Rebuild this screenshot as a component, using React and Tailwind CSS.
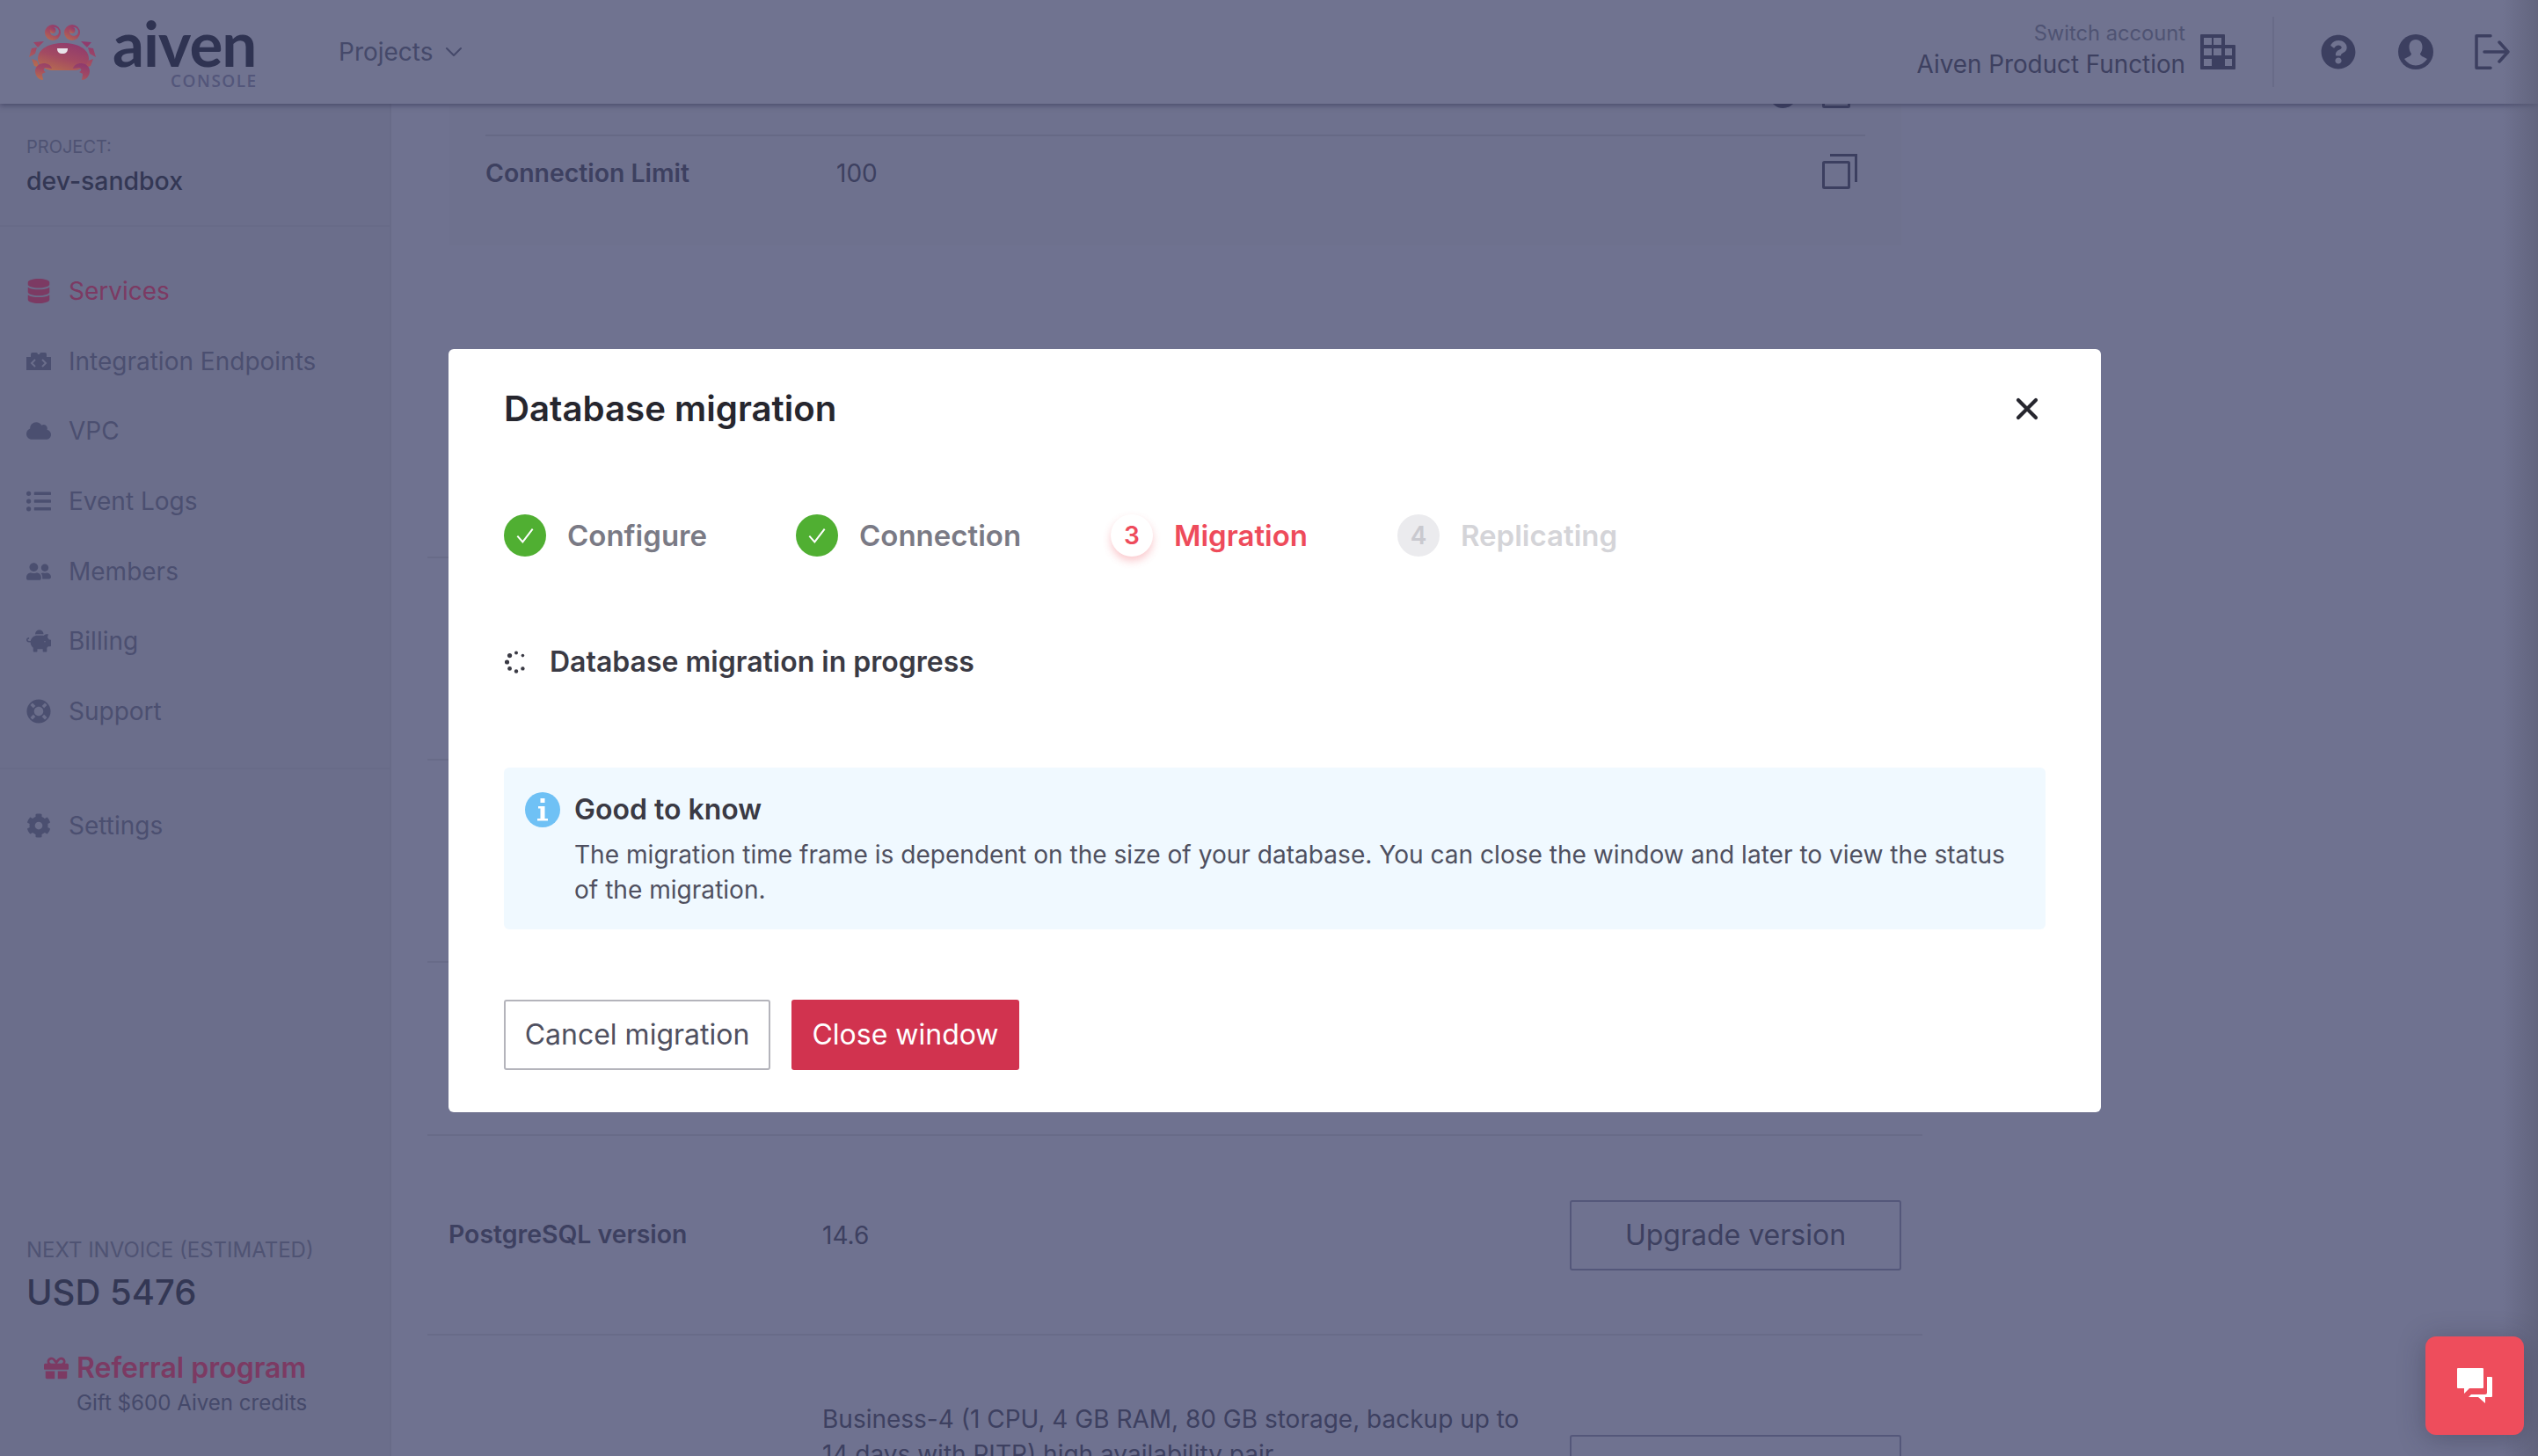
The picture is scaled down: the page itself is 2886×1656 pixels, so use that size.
import { ChevronDown, X } from 'lucide-react';
import {
  FaCloud,
  FaCog,
  FaDatabase,
  FaGift,
  FaLifeRing,
  FaListUl,
  FaPiggyBank,
  FaQuestionCircle,
  FaUserFriends,
} from 'react-icons/fa';

function EndpointIcon({ className }) {
  return (
    <svg viewBox="0 0 28 20" className={className} fill="currentColor">
      <path d="M0 5h5V2a2 2 0 0 1 2-2h4a2 2 0 0 1 2 2h2a2 2 0 0 1 2-2h4a2 2 0 0 1 2 2v3h5v15H0z" />
      <path d="M10 8l-4 4 4 4M18 8l4 4-4 4" fill="none" stroke="#6b6e8b" strokeWidth="2" />
    </svg>
  );
}

const NAV = [
  { label: 'Services', icon: FaDatabase, active: true },
  { label: 'Integration Endpoints', icon: EndpointIcon },
  { label: 'VPC', icon: FaCloud },
  { label: 'Event Logs', icon: FaListUl },
  { label: 'Members', icon: FaUserFriends },
  { label: 'Billing', icon: FaPiggyBank },
  { label: 'Support', icon: FaLifeRing },
];

function NavItem({ item }) {
  const Icon = item.icon;
  return (
    <div className={`flex h-[79.7px] items-center gap-5 pl-[30px] ${item.active ? 'text-[#7c3a63]' : 'text-[#4b4f70]'}`}>
      <Icon className="h-7 w-7 shrink-0" />
      <span className="text-[28px] leading-none">{item.label}</span>
    </div>
  );
}

function Crab() {
  return (
    <svg viewBox="33 21 76 63" className="h-[63px] w-[76px] shrink-0">
      <defs>
        <linearGradient id="crab" x1="0.8" y1="0" x2="0.25" y2="1">
          <stop offset="0" stopColor="#8f3a6e" />
          <stop offset="0.55" stopColor="#a34a62" />
          <stop offset="1" stopColor="#b56a50" />
        </linearGradient>
      </defs>
      <g fill="url(#crab)">
        <circle cx="60" cy="30" r="9" />
        <circle cx="82" cy="30" r="9" />
        <path d="M43 60c0-11 12-18 29-18s29 7 29 18c0 8-10 13-16 13H59c-6 0-16-5-16-13z" />
        <path d="M38 41l12-1-7 7zM104 41l-12-1 7 7zM33 58l3-10 6-1-2 7zM109 58l-3-10-6-1 2 7zM36 60l6 2 3 8-6-2zM106 60l-6 2-3 8 6-2z" />
        <path d="M49 84c-5 0-9-5-9-10s4-9 10-9c4 0 8 2 9 6l-7-1c-3 0-3 4 0 5l-4 2c0 3 1 5 1 7zM93 84c5 0 9-5 9-10s-4-9-10-9c-4 0-8 2-9 6l7-1c3 0 3 4 0 5l4 2c0 3-1 5-1 7z" />
      </g>
      <circle cx="62" cy="29" r="5" fill="#6f7290" />
      <circle cx="84" cy="29" r="5" fill="#6f7290" />
      <circle cx="60" cy="27.5" r="3.4" fill="url(#crab)" />
      <circle cx="82" cy="27.5" r="3.4" fill="url(#crab)" />
      <path d="M65 48h12c0 4-2 6-6 6s-6-2-6-6z" fill="#e8e4ea" />
    </svg>
  );
}

function BuildingIcon() {
  return (
    <svg viewBox="0 0 40 40" className="ml-[17px] h-10 w-10 shrink-0">
      <path d="M1 0h26a1 1 0 0 1 1 1v11h11a1 1 0 0 1 1 1v26a1 1 0 0 1-1 1H1a1 1 0 0 1-1-1V1a1 1 0 0 1 1-1z" fill="#3c3f60" />
      <path d="M4 4h9v8H4zM15 4h9v8h-9zM4 16h9v8H4zM15 16h9v8h-9zM4 28h9v8H4zM28 16h8v8h-8zM28 28h8v8h-8z" fill="#707390" />
    </svg>
  );
}

function UserDisc({ className }) {
  return (
    <svg viewBox="0 0 40 40" className={className}>
      <circle cx="20" cy="20" r="20" fill="#3c3f60" />
      <path d="M20 6c-5 0-7.5 4-7.5 8.500 0 3 1 5.500 2.500 7.500 0 3-4 3.500-8 6 3 4.500 8 7.500 13 7.500s10-3 13-7.500c-4-2.500-8-3-8-6 1.500-2 2.500-4.500 2.500-7.500C27.500 10 25 6 20 6z" fill="#707390" />
    </svg>
  );
}

function LogoutIcon({ className }) {
  return (
    <svg viewBox="0 0 40 40" className={className} fill="none" stroke="#3c3f60" strokeWidth="3.5" strokeLinecap="round" strokeLinejoin="round">
      <path d="M18 1.800H2v36.400h16M11 20h27M28 9l10 11-10 11" />
    </svg>
  );
}

function CopyIcon() {
  return (
    <svg viewBox="0 0 40 40" className="h-10 w-10 shrink-0" fill="none" stroke="#3c3f60" strokeWidth="3">
      <rect x="1.500" y="9.500" width="29" height="29" rx="1" />
      <path d="M9 1.500h29.500V32" />
    </svg>
  );
}

function CheckCircle() {
  return (
    <div className="flex h-12 w-12 shrink-0 items-center justify-center rounded-full bg-[#50af32]">
      <svg viewBox="0 0 24 24" className="h-8 w-8" fill="none" stroke="#fff" strokeWidth="1.500">
        <path d="M5.500 12.500l4.500 5 8.500-11" />
      </svg>
    </div>
  );
}

const DOTS = [2.2, 2.2, 2.4, 2.6, 2.6, 2, 1.8];

function Spinner() {
  return (
    <svg viewBox="-13 -13 26 26" className="ml-px h-[26px] w-[26px] shrink-0" fill="#3a3a44">
      {DOTS.map((r, i) => {
        const a = ((i + 1) * Math.PI) / 4;
        return <circle key={i} cx={Math.cos(a) * 10.500} cy={Math.sin(a) * 10.500} r={r} />;
      })}
    </svg>
  );
}

function InfoIcon() {
  return (
    <svg viewBox="0 0 40 40" className="h-10 w-10 shrink-0">
      <circle cx="20" cy="20" r="20" fill="#6fc1f5" />
      <path d="M17.500 7h5v5h-5zM15 16h7.500v14H26v2.500H14V30h3.500V18.500H15z" fill="#fff" />
    </svg>
  );
}

function ChatIcon() {
  return (
    <svg viewBox="0 0 40 40" className="h-10 w-10" fill="#fff">
      <path d="M1 0h28a1 1 0 0 1 1 1v21a1 1 0 0 1-1 1H14l-6 6v-6H1a1 1 0 0 1-1-1V1a1 1 0 0 1 1-1z" />
      <path d="M34 10h5a1 1 0 0 1 1 1v21a1 1 0 0 1-1 1h-7v7l-8-7H13l3-3h16a2 2 0 0 0 2-2z" />
    </svg>
  );
}

function Step({ label, state, number, wide }) {
  const text = {
    done: 'text-[#7a7a85]',
    active: 'text-[#ee4b5b]',
    todo: 'text-[#d4d4d8]',
  }[state];
  return (
    <div className={`flex items-center gap-6 ${wide}`}>
      {state === 'done' && <CheckCircle />}
      {state === 'active' && (
        <div className="flex h-12 w-12 shrink-0 items-center justify-center rounded-full bg-white text-[28px] font-semibold text-[#ee4b5b] shadow-[0_5px_10px_rgba(238,75,91,0.3)]">
          {number}
        </div>
      )}
      {state === 'todo' && (
        <div className="flex h-12 w-12 shrink-0 items-center justify-center rounded-full bg-[#ebebee] text-[28px] font-semibold text-[#c9c9cf]">
          {number}
        </div>
      )}
      <span className={`text-[33px] font-semibold leading-none ${text}`}>{label}</span>
    </div>
  );
}

export default function App() {
  return (
    <div className="relative flex h-[1656px] w-[2886px] flex-col overflow-hidden bg-[#6f7290] font-[Inter,sans-serif]">
      <header className="relative z-10 flex h-[118px] shrink-0 items-center bg-[#707390] pl-[33px] pr-8 shadow-[0_2px_6px_rgba(50,52,85,0.6)]">
        <Crab />
        <div className="relative ml-[19px] h-[118px] w-[170px] shrink-0">
          <span className="absolute left-0 top-[17px] font-[Lato,sans-serif] text-[71px] font-bold leading-[64px] tracking-[-1px] text-[#2f3352]">aiven</span>
          <span className="absolute left-[66px] top-[82px] font-['Open_Sans',sans-serif] text-[19px] font-semibold leading-[20px] tracking-[1.500px] text-[#53567a]">CONSOLE</span>
        </div>
        <div className="ml-[87px] flex items-center gap-[7px] text-[28px] text-[#45496a]">
          Projects
          <ChevronDown className="h-8 w-8" strokeWidth={1.500} />
        </div>
        <div className="-mt-[6px] ml-auto flex flex-col items-end">
          <span className="text-[23.7px] leading-[34px] text-[#4f5373]">Switch account</span>
          <span className="text-[27.800px] leading-[36px] text-[#3d4060]">Aiven Product Function</span>
        </div>
        <BuildingIcon />
        <div className="ml-[42px] h-20 w-0.5 bg-[#686b88]" />
        <FaQuestionCircle className="ml-[53px] h-10 w-10 text-[#3c3f60]" />
        <UserDisc className="ml-12 h-10 w-10" />
        <LogoutIcon className="ml-[47px] h-10 w-10" />
      </header>

      <div className="flex min-h-0 flex-1">
        <aside className="flex w-[445px] shrink-0 flex-col border-r-2 border-[#686b88] bg-[#6b6e8b]">
          <div className="h-[140px] border-b-2 border-[#686b88] pl-[30px] pt-[37px]">
            <div className="text-[20px] leading-6 text-[#4f5373]">PROJECT:</div>
            <div className="mt-[9px] text-[28.4px] font-medium leading-9 text-[#333754]">dev-sandbox</div>
          </div>
          <nav className="border-b-2 border-[#686b88] pb-6 pt-[33px]">
            {NAV.map((item) => (
              <NavItem key={item.label} item={item} />
            ))}
          </nav>
          <div className="pt-6">
            <NavItem item={{ label: 'Settings', icon: FaCog }} />
          </div>
          <div className="mt-auto pb-[42px]">
            <div className="pl-[30px] text-[24px] leading-7 text-[#4f5373]">NEXT INVOICE (ESTIMATED)</div>
            <div className="mt-[9px] pl-[30px] text-[40px] font-medium leading-[50px] text-[#333754]">USD 5476</div>
            <div className="ml-[50px] mt-[41px] flex items-center gap-[9px]">
              <FaGift className="h-7 w-7 text-[#7c3a63]" />
              <span className="text-[32px] font-semibold leading-[40px] text-[#7c3a63]">Referral program</span>
            </div>
            <div className="ml-[87px] mt-0.5 text-[24.1px] leading-[36px] text-[#45496a]">Gift $600 Aiven credits</div>
          </div>
        </aside>

        <main className="min-w-0 flex-1 overflow-hidden">
          <section className="-mt-[59px] ml-[66px] w-[1651px] bg-[#6e718e] px-[41px] pb-10">
            <div className="flex items-start justify-end gap-[29px] border-b-2 border-[#666985] pb-[30px] pr-[9px] pt-6">
              <div className="h-10 w-[31px] rounded-full bg-[#3c3f60]" />
              <CopyIcon />
            </div>
            <div className="flex h-[84px] items-center pr-[9px] text-[28px] text-[#3d4060]">
              <span className="w-[399px] text-[28.4px] font-semibold">Connection Limit</span>
              <span>100</span>
              <div className="-mt-1 ml-auto"><CopyIcon /></div>
            </div>
          </section>
          <div className="ml-[41px] w-[1700px]">
            <div className="h-[356px] border-b-2 border-[#686b88]" />
            <div className="h-[230px] border-b-2 border-[#686b88]" />
            <div className="h-[230px] border-b-2 border-[#686b88]" />
            <div className="h-[197px] border-b-2 border-[#686b88]" />
            <div className="flex h-[227px] items-center border-b-2 border-[#686b88] pl-6 pr-6 text-[28px] text-[#3d4060]">
              <span className="w-[425px] text-[28.4px] font-semibold">PostgreSQL version</span>
              <span>14.6</span>
              <button type="button" className="ml-auto flex h-20 w-[377px] items-center justify-center rounded-[3px] border-2 border-[#54577a] text-[32px] text-[#3d4060]">
                Upgrade version
              </button>
            </div>
            <div className="flex items-start pl-6 pr-6 pt-[75px] text-[28px] leading-10 text-[#3d4060]">
              <span className="ml-[425px] w-[810px]">Business-4 (1 CPU, 4 GB RAM, 80 GB storage, backup up to 14 days with PITR) high availability pair</span>
              <div className="ml-auto mt-[38px] h-20 w-[377px] rounded-[3px] border-2 border-[#54577a]" />
            </div>
          </div>
        </main>
      </div>

      <div className="pointer-events-none absolute inset-y-0 right-0 z-[15] w-10 bg-linear-to-r from-transparent to-[#5c5e76]/70" />

      <div className="absolute left-[510px] top-[397px] z-20 h-[868px] w-[1879px] rounded-md bg-white px-[63px] pt-[46px]">
        <div className="flex h-11 items-center justify-between">
          <h2 className="text-[40.2px] font-semibold leading-none text-[#26262e]">Database migration</h2>
          <X className="mr-px h-10 w-10 text-[#26262e]" strokeWidth={2.500} />
        </div>
        <div className="mt-[98px] flex h-12 items-center">
          <Step label="Configure" state="done" wide="w-[332px]" />
          <Step label="Connection" state="done" wide="w-[358px]" />
          <Step label="Migration" state="active" number="3" wide="w-[326px]" />
          <Step label="Replicating" state="todo" number="4" />
        </div>
        <div className="mt-[100px] flex items-center gap-[25px]">
          <Spinner />
          <span className="text-[32px] font-semibold leading-10 text-[#3a3a44]">Database migration in progress</span>
        </div>
        <div className="mt-[100px] flex h-[184px] w-[1753px] gap-4 rounded-md bg-[#f0f9ff] pl-6 pr-6 pt-[28px]">
          <InfoIcon />
          <div>
            <div className="text-[32px] font-semibold leading-10 text-[#3a3a44]">Good to know</div>
            <p className="mt-[11px] text-[28.08px] leading-10 text-[#4f5060]">
              The migration time frame is dependent on the size of your database. You can close the window and later to view the status of the migration.
            </p>
          </div>
        </div>
        <div className="mt-20 flex gap-6">
          <button type="button" className="flex h-20 w-[303px] items-center justify-center rounded-[3px] border-2 border-[#b4b4bb] bg-white text-[32px] text-[#4f5060]">
            Cancel migration
          </button>
          <button type="button" className="flex h-20 w-[259px] items-center justify-center rounded-[3px] bg-[#d1334f] text-[32px] text-white">
            Close window
          </button>
        </div>
      </div>

      <div className="absolute left-[2758px] top-[1520px] z-30 flex h-28 w-28 items-center justify-center rounded-xl bg-[#ee4d5c] shadow-[0_4px_30px_rgba(40,40,60,0.35)]">
        <ChatIcon />
      </div>
    </div>
  );
}
